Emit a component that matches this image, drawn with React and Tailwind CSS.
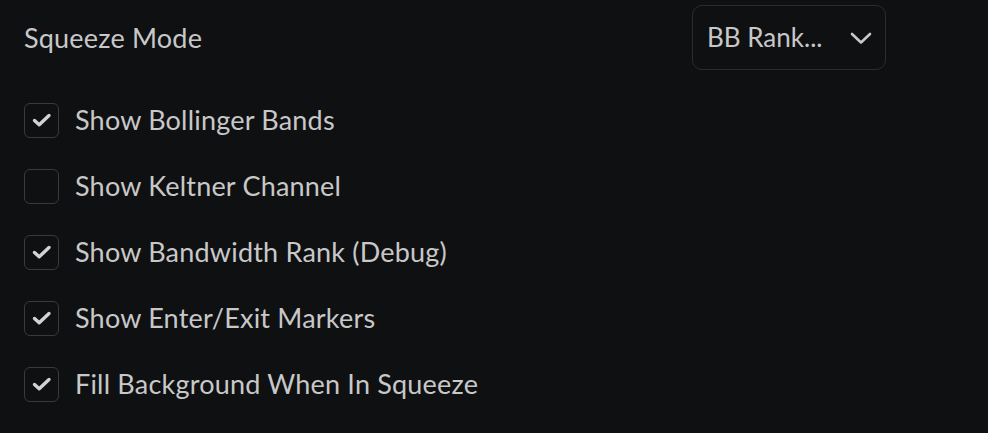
import React from "react";

const rows = [
  { label: "Show Bollinger Bands", checked: true },
  { label: "Show Keltner Channel", checked: false },
  { label: "Show Bandwidth Rank (Debug)", checked: true },
  { label: "Show Enter/Exit Markers", checked: true },
  { label: "Fill Background When In Squeeze", checked: true },
];

function Check() {
  return (
    <svg width="24" height="24" viewBox="0 0 24 24" fill="none">
      <path d="M4.5 12.5 L9.2 16.8 L19 7.5" stroke="#d2d2d2" strokeWidth="3.4" strokeLinecap="round" strokeLinejoin="round" />
    </svg>
  );
}

export default function App() {
  return (
    <div
      className="w-[988px] h-[433px] bg-[#0f1012] text-[#c8c8c8] text-[27px] tracking-[0.2px] pl-[24px] pt-[5px] overflow-hidden"
      style={{ fontFamily: "Lato, 'Open Sans', sans-serif" }}
    >
      <div className="flex items-center">
        <div className="w-[668px] pt-[2px]">Squeeze Mode</div>
        <div className="w-[194px] h-[65px] rounded-[10px] border border-[#2c2c2e] flex items-center pl-[14px] pr-[12px] justify-between">
          <span className="text-[26px] tracking-normal">BB Rank...</span>
          <svg width="24" height="24" viewBox="0 0 24 24" fill="none">
            <path d="M3 8 L12 16.5 L21 8" stroke="#c8c8c8" strokeWidth="2.6" strokeLinecap="round" strokeLinejoin="round" />
          </svg>
        </div>
      </div>
      <div className="mt-[17px] flex flex-col">
        {rows.map((r) => (
          <div key={r.label} className="h-[66px] flex items-center">
            <div className="w-[35px] h-[35px] rounded-[6px] border border-[#3a3a3c] flex items-center justify-center">
              {r.checked && <Check />}
            </div>
            <span className="ml-[16px]">{r.label}</span>
          </div>
        ))}
      </div>
    </div>
  );
}
